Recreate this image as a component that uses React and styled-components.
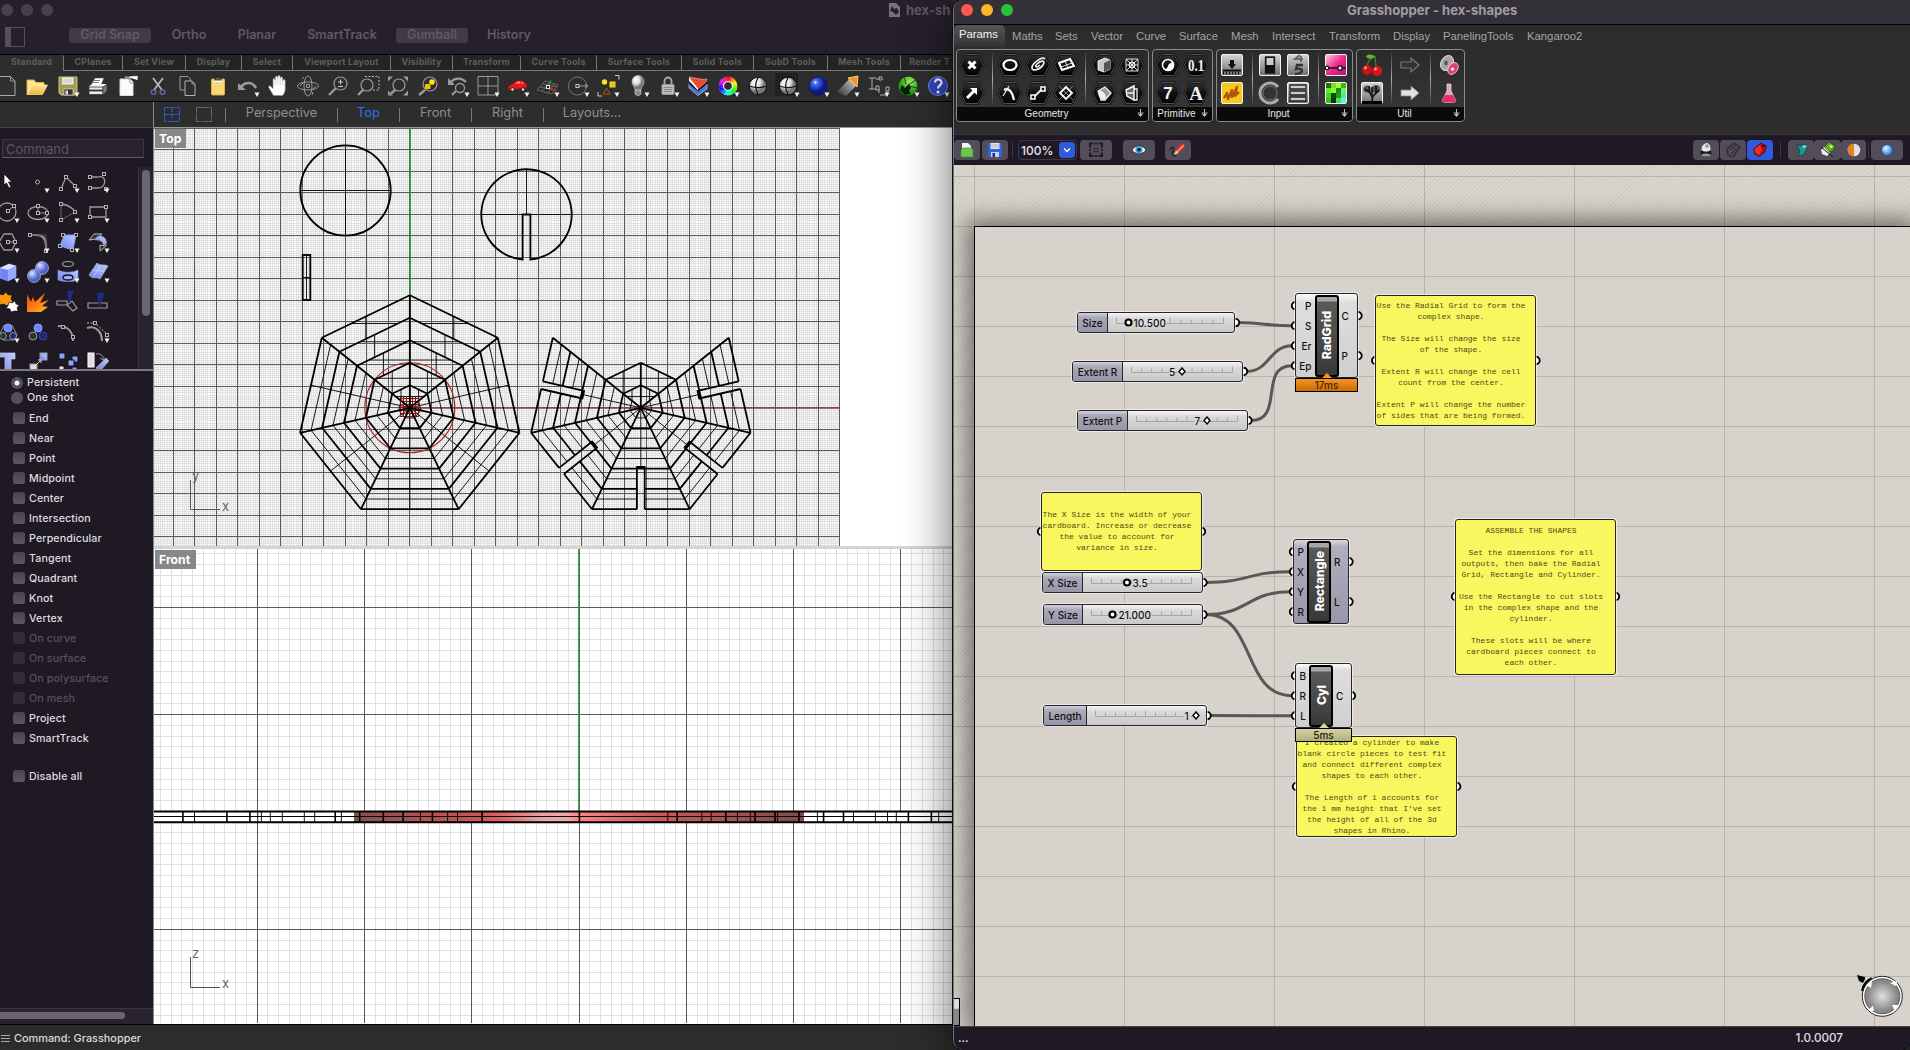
import React from "react";
import styled, { createGlobalStyle, css } from "styled-components";

const Global = createGlobalStyle`
  * { box-sizing: border-box; }
  html, body { margin: 0; padding: 0; background: #000; }
  body { width: 1910px; height: 1050px; overflow: hidden; font-family: Inter, "Liberation Sans", sans-serif; }
`;

/* ---------- shell ---------- */
const Desktop = styled.div`
  display: flex;
  width: 1910px;
  height: 1050px;
  overflow: hidden;
  background: #2c2c2c;
`;
const Rhino = styled.section`
  width: 953px;
  height: 1050px;
  flex: none;
  display: flex;
  flex-direction: column;
  background: #2c2c2c;
`;
const Hopper = styled.section`
  position: relative;
  width: 957px;
  height: 1050px;
  flex: none;
  display: flex;
  flex-direction: column;
  border-left: 1px solid #77737a;
  border-radius: 10px 0 10px 10px;
  overflow: hidden;
  background: #2d2d2d;
`;
const HopperShadow = styled.div`
  display: flex;
  border-radius: 10px 0 10px 10px;
  box-shadow: 0 0 0 1px #111, 0 8px 48px 0 rgba(0, 0, 0, 0.62);
  z-index: 2;
`;

/* ---------- Rhino title and mode bar ---------- */
const RhinoHead = styled.header`
  height: 55px;
  flex: none;
  background: #26202b;
  border-bottom: 1px solid #000;
`;
const TitleRow = styled.div`
  display: flex;
  height: 20px;
  align-items: center;
  padding-left: 1px;
  gap: 8px;
`;
const Dot = styled.i`
  flex: none;
  width: 12px;
  height: 12px;
  border-radius: 50%;
  background: ${(p) => p.$c};
`;
const DocTitle = styled.span`
  display: flex;
  flex: none;
  align-items: center;
  gap: 6px;
  margin-left: 828px;
  white-space: nowrap;
  font-size: 13px;
  font-weight: 700;
  color: #5f5966;
`;
const ModeRow = styled.div`
  display: flex;
  align-items: center;
  height: 31px;
  padding-left: 5px;
`;
const SidebarGlyph = styled.i`
  width: 20px;
  height: 20px;
  border: 1px solid #56505c;
  border-left: 6px solid #56505c;
  margin: 2px 44px 0 0;
`;
const Mode = styled.span`
  width: ${(p) => p.$w}px;
  margin-right: ${(p) => p.$gap}px;
  height: 15px;
  border-radius: 3px;
  line-height: 14px;
  text-align: center;
  white-space: nowrap;
  font-size: 12.5px;
  font-weight: 600;
  color: #5f5966;
  background: ${(p) => (p.$on ? "#413b47" : "transparent")};
`;

/* ---------- Rhino tool tabs ---------- */
const TabRow = styled.nav`
  display: flex;
  height: 16px;
  flex: none;
  background: #2d2d2d;
  overflow: hidden;
`;
const ToolTab = styled.span`
  flex: none;
  width: ${(p) => p.$w}px;
  text-align: center;
  font-size: 8.8px;
  font-weight: 700;
  letter-spacing: 0.25px;
  line-height: 14px;
  white-space: nowrap;
  color: #5e5e5e;
  background: ${(p) => (p.$on ? "#2d2d2d" : "#242424")};
  border-right: 1px solid #777;
  border-bottom: ${(p) => (p.$on ? "0" : "1px solid #777")};
  border-radius: 0 3px 0 0;
`;
const IconBar = styled.div`
  display: flex;
  flex: none;
  height: 31px;
  margin-left: -7px;
  padding-right: 0;
  background: #2d2d2d;
  border-bottom: 1px solid #000;
  overflow: hidden;
`;
const Glyph = styled.svg`
  display: block;
  flex: none;
  width: 30px;
  height: 30px;
`;

/* ---------- view tabs ---------- */
const ViewBar = styled.div`
  display: flex;
  flex: none;
  height: 26px;
  background: #2d2d2d;
`;
const ViewBlank = styled.div`
  width: 154px;
  border-right: 1px solid #888;
  border-bottom: 1px solid #454545;
`;
const ViewTabs = styled.div`
  flex: 1;
  display: flex;
  align-items: center;
  padding: 0 0 4px 10px;
  border-bottom: 1px solid #999;
`;
const LayoutIcon = styled.svg`
  width: 16px;
  height: 15px;
  margin: 3px ${(p) => p.$r}px 0 0;
`;
const ViewTab = styled.span`
  width: ${(p) => p.$w}px;
  text-align: center;
  font-size: 12.8px;
  line-height: 20px;
  white-space: nowrap;
  color: ${(p) => (p.$on ? "#2f72ec" : "#8f8f8f")};
`;
const ViewSep = styled.i`
  width: 1px;
  height: 14px;
  margin-top: 5px;
  background: #777;
`;

/* ---------- Rhino body ---------- */
const RhinoBody = styled.div`
  display: flex;
  flex: none;
  height: 896px;
`;
const Side = styled.aside`
  width: 154px;
  flex: none;
  display: flex;
  flex-direction: column;
  background: #1f1924;
  border-right: 1px solid #888;
`;
const CommandBox = styled.div`
  flex: none;
  width: 142px;
  height: 19px;
  margin: 11px 0 9px 2px;
  padding-left: 3px;
  border: 1px solid #3d3843;
  border-bottom-color: #5e5964;
  background: #28222e;
  font-size: 13px;
  line-height: 18px;
  color: #5c5761;
`;
const PaletteArea = styled.div`
  display: flex;
  flex: none;
  height: 204px;
  overflow: hidden;
  border-bottom: 2px solid #7b7980;
`;
const Palette = styled.div`
  display: grid;
  grid-template-columns: repeat(4, 30px);
  grid-auto-rows: 30px;
  margin-left: -7px;
  width: 145px;
  flex: none;
`;
const Track = styled.div`
  flex: 1;
  padding: 3px 3px 0 3px;
  background: #28232e;
  border-left: 1px solid #38333e;
`;
const Thumb = styled.i`
  display: block;
  width: 8px;
  height: 146px;
  border-radius: 4px;
  background: #6a6670;
`;
const Snaps = styled.div`
  flex: 1;
  padding-top: 4px;
`;
const RadioRow = styled.div`
  display: flex;
  align-items: center;
  height: 15px;
  padding-left: 11px;
  gap: 4px;
  font-size: 10.7px;
  font-weight: 500;
  letter-spacing: 0.1px;
  color: #dedce0;
`;
const Radio = styled.i`
  width: 12px;
  height: 12px;
  border-radius: 50%;
  background: ${(p) =>
    p.$on ? "radial-gradient(circle, #f2f2f2 0 2.2px, #55505a 2.8px)" : "#55505a"};
`;
const CheckRow = styled.div`
  display: flex;
  align-items: center;
  height: 20px;
  margin-top: ${(p) => p.$mt || 0}px;
  padding-left: 13px;
  gap: 4px;
  font-size: 10.7px;
  font-weight: 500;
  letter-spacing: 0.1px;
  color: ${(p) => (p.$off ? "#57525c" : "#dedce0")};
`;
const Check = styled.i`
  width: 12px;
  height: 12px;
  border-radius: 2.5px;
  background: ${(p) => (p.$off ? "#332d39" : "linear-gradient(#48434d, #5d5862)")};
`;
const SideFoot = styled.div`
  flex: none;
  height: 16px;
  padding-top: 3px;
  background: #28232e;
  border-top: 1px solid #3a3540;
`;
const FootThumb = styled.i`
  display: block;
  width: 125px;
  height: 7px;
  border-radius: 0 4px 4px 0;
  background: #6a6670;
`;
const Views = styled.div`
  flex: 1;
  display: flex;
  flex-direction: column;
  background: #d4d4d4;
  gap: 3px;
`;
const Viewport = styled.div`
  position: relative;
  height: ${(p) => p.$h}px;
  background: #fff;
  overflow: hidden;
`;
const Drawing = styled.svg`
  display: block;
`;
const ViewLabel = styled.span`
  position: absolute;
  left: 1px;
  top: 1px;
  height: 19px;
  width: ${(p) => p.$w}px;
  padding-left: 4px;
  background: #878787;
  color: #fff;
  font-size: 12.2px;
  font-weight: 700;
  line-height: 19px;
`;
const RhinoStatus = styled.footer`
  flex: 1;
  display: flex;
  align-items: center;
  gap: 4px;
  padding: 1px 0 0 1px;
  border-top: 1px solid #000;
  background: #2c2c2c;
  font-size: 10.9px;
  font-weight: 500;
  color: #dcdcdc;
`;

/* ---------- Grasshopper chrome ---------- */
const HopperTitle = styled.header`
  display: flex;
  align-items: center;
  flex: none;
  height: 25px;
  padding: 0 0 4px 7px;
  gap: 8px;
  background: #343038;
  border-bottom: 1px solid #000;
`;
const HopperName = styled.span`
  margin-left: 326px;
  font-size: 13.05px;
  font-weight: 700;
  color: #a19da6;
`;
const MenuRow = styled.nav`
  display: flex;
  flex: none;
  height: 22px;
  background: linear-gradient(#2b2b2b, #2d2d2d);
`;
const MenuItem = styled.span`
  width: ${(p) => p.$w}px;
  flex: none;
  font: 11.3px "Liberation Sans", Arial, sans-serif;
  line-height: 22px;
  white-space: nowrap;
  color: #a4a4a4;
  ${(p) =>
    p.$on &&
    css`
      padding-left: 5px;
      margin-right: 7px;
      line-height: 18px;
      color: #f2f2f2;
      border-radius: 5px 5px 0 0;
      background: linear-gradient(#565656, #333);
    `}
`;
const Ribbon = styled.div`
  display: flex;
  flex: none;
  height: 88px;
  gap: 3px;
  padding: 2px 0 0 2px;
  background: #2d2d2d;
  border-bottom: 1px solid #3b363f;
`;
const Group = styled.div`
  display: flex;
  flex-direction: column;
  width: ${(p) => p.$w}px;
  height: 73px;
  border: 1px solid #8b8b8b;
  border-radius: 4px;
  overflow: hidden;
  background: linear-gradient(#2a2a2a, #383838);
`;
const GroupIcons = styled.div`
  flex: 1;
  display: flex;
  align-items: center;
  padding-left: 1px;
`;
const IconCol = styled.div`
  display: flex;
  flex-direction: column;
`;
const GhIcon = styled.svg`
  display: block;
  width: 28px;
  height: 28px;
`;
const ColSep = styled.i`
  width: 1px;
  height: 52px;
  margin: 0 ${(p) => p.$r}px 0 ${(p) => p.$l}px;
  background: linear-gradient(#3a3a3a, #aaa, #3a3a3a);
`;
const GroupName = styled.div`
  display: flex;
  align-items: center;
  justify-content: center;
  height: 14px;
  padding: 0 3px 2px 0;
  background: #0a0a0a;
  color: #e8e8e8;
  font: 10px "Liberation Sans", Arial, sans-serif;
  & > span { flex: 1; text-align: center; }
`;
const ToolBar = styled.div`
  display: flex;
  align-items: center;
  flex: none;
  height: 30px;
  background: #1f1925;
`;
const ToolButton = styled.span`
  display: flex;
  align-items: center;
  justify-content: center;
  width: ${(p) => p.$w}px;
  height: 20px;
  margin-right: ${(p) => p.$r || 0}px;
  border-radius: 4px;
  background: ${(p) => (p.$on ? "#2f5bdc" : "#524d59")};
`;
const ToolSep = styled.i`
  width: 1px;
  height: 16px;
  margin: 0 ${(p) => p.$r}px 0 ${(p) => p.$l}px;
  background: #3b3642;
`;
const Combo = styled.span`
  display: flex;
  align-items: center;
  justify-content: space-between;
  width: 59px;
  height: 20px;
  margin-right: 3px;
  padding: 0 1px 0 2px;
  border: 1px solid #3d3844;
  border-radius: 4px;
  font-size: 12px;
  font-weight: 500;
  color: #e6e4e8;
`;
const ComboKnob = styled.i`
  display: flex;
  align-items: center;
  justify-content: center;
  width: 16px;
  height: 16px;
  border-radius: 4px;
  background: #2f5bdc;
`;
const Mini = styled.svg`
  width: 18px;
  height: 18px;
`;
const Spacer = styled.i`
  flex: 1;
`;
const HopperStatus = styled.footer`
  display: flex;
  align-items: center;
  justify-content: space-between;
  flex: 1;
  padding: 0 67px 2px 4px;
  background: #1f1925;
  border-top: 1px solid #444;
  font-size: 11.7px;
  font-weight: 500;
  color: #e2e0e4;
`;

/* ---------- Grasshopper canvas ---------- */
const ORIGIN = { x: 954, y: 165 };
const Canvas = styled.div`
  position: relative;
  display: flex;
  flex: none;
  height: 861px;
  padding: 61px 0 0 20px;
  overflow: hidden;
  background: repeating-linear-gradient(135deg, #d8d5cc 0 2.4px, #d0cdc4 2.4px 3.4px);
`;
const Sheet = styled.div`
  flex: 1;
  border-left: 1px solid #000;
  border-top: 1px solid #000;
  background: #d7d3cc;
  box-shadow: 0 0 22px 7px rgba(0, 0, 0, 0.48);
`;
const CanvasGrid = styled.div`
  position: absolute;
  inset: 0;
  background-image: linear-gradient(90deg, rgba(0, 0, 0, 0.15) 1px, transparent 1px),
    linear-gradient(rgba(0, 0, 0, 0.15) 1px, transparent 1px);
  background-size: 150px 150px, 50px 50px;
  background-position: 20px 0, 0 11px;
`;
const Wires = styled.svg`
  position: absolute;
  left: 0;
  top: 0;
`;
const at = css`
  position: absolute;
  left: ${(p) => p.$x - ORIGIN.x}px;
  top: ${(p) => p.$y - ORIGIN.y}px;
`;
const SliderBox = styled.div`
  ${at}
  display: flex;
  width: ${(p) => p.$w}px;
  height: 21px;
  border: 1.5px solid #26262a;
  border-radius: 3px;
  overflow: hidden;
  background: linear-gradient(#f4f4f4, #d9d9d9 30%, #c9c9c9);
  box-shadow: 0 0 0 1px rgba(255, 255, 255, 0.55);
`;
const SliderName = styled.span`
  width: ${(p) => p.$w}px;
  flex: none;
  border-right: 1.5px solid #26262a;
  background: linear-gradient(#d2d1dc, #a9a8b8 25%, #9795a8);
  font-size: 10px;
  font-weight: 500;
  line-height: 20px;
  text-align: center;
  white-space: nowrap;
  color: #111;
`;
const ValueText = styled.text`
  font: 500 10px Inter, "Liberation Sans", sans-serif;
  fill: #111;
`;
const NodeBox = styled.div`
  ${at}
  display: flex;
  width: ${(p) => p.$w}px;
  height: ${(p) => p.$h}px;
  border: 1.5px solid #26262a;
  border-radius: 3px;
  background: ${(p) =>
    p.$idle
      ? "linear-gradient(#dcdbe4, #b0afbe 8%, #9897a8)"
      : "linear-gradient(#fbfbfb, #dedede 10%, #cfcfcf)"};
  box-shadow: 0 0 0 1px rgba(255, 255, 255, 0.55);
`;
const Ports = styled.div`
  width: ${(p) => p.$w}px;
  display: flex;
  flex-direction: column;
  justify-content: space-around;
  padding: ${(p) => (p.$out ? "2px 0 1px 3px" : "2px 3px 1px 0")};
`;
const Port = styled.span`
  flex: 1;
  display: flex;
  align-items: center;
  justify-content: ${(p) => (p.$out ? "flex-start" : "flex-end")};
  font-size: 10px;
  font-weight: 500;
  color: #111;
`;
const Core = styled.div`
  width: 24px;
  margin: 0.5px 0;
  display: flex;
  align-items: center;
  justify-content: center;
  border: 2px solid #000;
  border-radius: 3px;
  background: linear-gradient(#a5a5a5 0 4px, #5a5a5a 5px, #383838);
`;
const CoreText = styled.span`
  writing-mode: vertical-rl;
  transform: rotate(180deg);
  font-size: 12.3px;
  font-weight: 800;
  letter-spacing: -0.1px;
  color: #fff;
`;
const TimeTag = styled.div`
  ${at}
  width: ${(p) => p.$w}px;
  height: 14px;
  border: 1.5px solid #000;
  background: ${(p) => (p.$hot ? "linear-gradient(#f59425, #c96c08)" : "linear-gradient(#d4d4a4, #b0b07c)")};
  font-size: 10px;
  font-weight: 500;
  line-height: 12px;
  text-align: center;
  color: ${(p) => (p.$hot ? "#4a2200" : "#22220c")};
  &::before {
    content: "";
    position: absolute;
    left: 50%;
    top: -6px;
    margin-left: -5px;
    border: 5px solid transparent;
    border-top: 0;
    border-bottom-color: ${(p) => (p.$hot ? "#f59425" : "#d4d4a4")};
  }
`;
const Note = styled.pre`
  ${at}
  margin: 0;
  width: ${(p) => p.$w}px;
  height: ${(p) => p.$h}px;
  padding: ${(p) => p.$pt}px 9px 0 0;
  border: 1.5px solid #26261a;
  border-radius: 3px;
  overflow: hidden;
  background: #f9f75f;
  box-shadow: 0 0 0 1px rgba(255, 255, 255, 0.6);
  font: 8px "Liberation Mono", monospace;
  line-height: 11px;
  text-align: center;
  color: #4c4b16;
`;
const CornerHandle = styled.i`
  position: absolute;
  left: -1px;
  top: 833px;
  width: 7px;
  height: 28px;
  border: 1px solid #000;
  background: linear-gradient(#ddd 35%, #888 40%);
`;
const Compass = styled.svg`
  position: absolute;
  left: 900px;
  top: 805px;
`;

/* ---------- Icon drawings ---------- */
const G = "#9a9a9a";
const Drop = () => <path d="M6.5 6.5h5l-2.5 4.5z" fill="#f2f2f2" />;
const Cell = ({ drop, children }) => (
  <Glyph viewBox="-15 -15 30 30" fill="none" stroke={G} strokeWidth="1">
    {children}
    {drop && <g stroke="none"><Drop /></g>}
  </Glyph>
);
const Sq = ({ x, y }) => <rect x={x - 1.5} y={y - 1.5} width="3" height="3" fill="#1f1924" stroke="#b0b0b0" strokeWidth="1" />;

const SharedDefs = () => (
  <svg width="0" height="0" aria-hidden="true" display="block">
    <defs>
      <linearGradient id="fold" x2="0" y2="1"><stop stopColor="#ffe48a" /><stop offset="1" stopColor="#f2b43a" /></linearGradient>
      <linearGradient id="blueFace" x1="0" y1="1" x2="1" y2="0"><stop stopColor="#6f7df5" /><stop offset="1" stopColor="#bcd0ff" /></linearGradient>
      <radialGradient id="blueBall" cx=".35" cy=".3"><stop stopColor="#dfe6ff" /><stop offset=".6" stopColor="#7f93ee" /><stop offset="1" stopColor="#5463c8" /></radialGradient>
      <radialGradient id="deepBall" cx=".35" cy=".3"><stop stopColor="#fff" /><stop offset=".25" stopColor="#4a6cf0" /><stop offset="1" stopColor="#0a1a90" /></radialGradient>
      <radialGradient id="skyBall" cx=".4" cy=".35"><stop stopColor="#e8f6ff" /><stop offset="1" stopColor="#4a98e0" /></radialGradient>
      <radialGradient id="whiteBall" cx=".35" cy=".3"><stop stopColor="#fff" /><stop offset=".6" stopColor="#ddd" /><stop offset="1" stopColor="#777" /></radialGradient>
      <radialGradient id="greenBall" cx=".6" cy=".3"><stop stopColor="#a4f06a" /><stop offset="1" stopColor="#2d9a1c" /></radialGradient>
      <linearGradient id="fire" x2="1" y2="1"><stop stopColor="#f24a08" /><stop offset=".5" stopColor="#ff7d10" /><stop offset="1" stopColor="#ffc020" /></linearGradient>
      <linearGradient id="hex" x2="0" y2="1"><stop stopColor="#333" /><stop offset=".5" stopColor="#111" /><stop offset="1" stopColor="#050505" /></linearGradient>
      <linearGradient id="steel" x2="0" y2="1"><stop stopColor="#d5d5d5" /><stop offset="1" stopColor="#6e6e6e" /></linearGradient>
      <linearGradient id="pink" x2="1" y2="1"><stop stopColor="#ffd0e8" /><stop offset=".5" stopColor="#f0288c" /><stop offset="1" stopColor="#b0107c" /></linearGradient>
      <linearGradient id="cone" x1="0" y1="1" x2="1" y2="0"><stop stopColor="#2d2d2d" /><stop offset=".75" stopColor="#aaa" /></linearGradient>
      <radialGradient id="dial"><stop stopColor="#e0e0e0" /><stop offset=".85" stopColor="#888" /></radialGradient>
      <linearGradient id="bar" gradientUnits="userSpaceOnUse" x1="354" x2="804" y1="0" y2="0">
        <stop offset="0" stopColor="#845050" /><stop offset=".12" stopColor="#a85252" /><stop offset=".28" stopColor="#c95656" />
        <stop offset=".34" stopColor="#e06a6a" /><stop offset=".42" stopColor="#e8a5a5" /><stop offset=".47" stopColor="#ecaaaa" />
        <stop offset=".5" stopColor="#ff8484" /><stop offset=".56" stopColor="#e87474" /><stop offset=".68" stopColor="#c95858" />
        <stop offset=".85" stopColor="#a55050" /><stop offset="1" stopColor="#7c4c4c" />
      </linearGradient>
    </defs>
  </svg>
);

const wheel = Array.from({ length: 24 }, (_, i) => {
  const a = (i * Math.PI) / 12, b = a + 0.29, r = 7;
  return <path key={i} d={`M${r * Math.sin(a)} ${-r * Math.cos(a)}A${r} ${r} 0 0 1 ${r * Math.sin(b)} ${-r * Math.cos(b)}`} stroke={`hsl(${i * 15},95%,52%)`} strokeWidth="4.4" />;
});
const gridPath = (a, b, s) => {
  let d = "";
  for (let v = a; v <= b; v += s) d += `M${v} ${a}V${b}M${a} ${v}H${b}`;
  return d;
};

const MainIcons = () => (
  <IconBar>
    <Cell><path d="M-10-9.500H2.500L7-5V9.500H-10z" fill="#303030" stroke="#aaa" /><path d="M2.500-9.500V-5H7" /></Cell>
    <Cell><path d="M-11 8V-6h7l2 2.500h8v4" fill="#ffe590" stroke="#e8ae30" /><path d="M-11 8.500L-6-1H9.500L4.500 8.500z" fill="url(#fold)" stroke="#fff0b0" strokeWidth=".7" /></Cell>
    <Cell drop><path d="M-9-9H9V9H-7L-9 7z" fill="#a39b52" stroke="#d0c880" /><rect x="-6" y="-8.500" width="11.500" height="7" fill="#ececec" stroke="none" /><path d="M-5-6H4M-5-4H4" stroke="#bbb" /><rect x="-4" y="3" width="9" height="6" fill="#333" stroke="#eee" strokeWidth=".6" /><rect x="-2.500" y="4.500" width="2.500" height="4" fill="#ddd" stroke="none" /></Cell>
    <Cell><path d="M-3-8H6L3-1H-7z" fill="#fff" stroke="#555" strokeWidth=".6" /><path d="M-4-5.500h6M-5-3.500h6" stroke="#777" /><path d="M-9 0L-5-2H9L5 1H-9z" fill="#f4f4f4" stroke="none" /><path d="M-9 1H5V4H-9zM-9 5H5V8.500H-9z" fill="#e8e8e8" stroke="#333" strokeWidth=".8" /><path d="M5 1L9-2V5L5 8.500z" fill="#777" stroke="#333" strokeWidth=".6" /></Cell>
    <Cell><path d="M-8-7H2L5-4V9.500H-8z" fill="#fafafa" stroke="#ddd" /><path d="M2-7V-3H5" stroke="#999" /><path d="M-3-9l5-1 8-.5v5l-7-2z" fill="#fff" stroke="#222" strokeWidth=".7" /><path d="M-3-9l5 2" stroke="#999" strokeWidth="2" /></Cell>
    <Cell><path d="M-5-8L4 4M5-8L-4 4" stroke="#bcbcbc" strokeWidth="1.700" /><circle cx="-4.500" cy="6" r="2.300" stroke="#5c66b0" strokeWidth="1.500" /><circle cx="4.500" cy="6" r="2.300" stroke="#5c66b0" strokeWidth="1.500" /></Cell>
    <Cell><path d="M-8-9.500H0L2.500-7V4H-8z" /><path d="M-3-5H4L7-2V9.500H-3z" fill="#2d2d2d" stroke="#b0b0b0" /><path d="M4-5V-2H7" /></Cell>
    <Cell><rect x="-6.500" y="-7" width="13" height="16" rx="1" fill="#f8d874" stroke="#e2b23c" /><path d="M-3-9H3V-5H-3z" fill="#555" stroke="#222" /><rect x="-4" y="-5.500" width="8" height="1.500" fill="#fff" stroke="none" /></Cell>
    <Cell drop><path d="M-7 1C-3-4 4-5 8 2" strokeWidth="2.600" stroke="#9c9c9c" /><path d="M-10-3V4H-2z" fill="#9c9c9c" stroke="none" /></Cell>
    <Cell><path d="M-4.500 9.500L-9 2c-1-2 .5-3 2-1.500L-5 2.500V-6c0-2 2-2 2.200 0V-8c0-2.500 2.500-2.500 2.500 0V-9c0-2 2.500-2 2.500 0v1.500c0-2 2.500-2 2.500 0V-5c0-2 2.500-2 2.500 0V3c0 3-1.500 5-2.500 6.500z" fill="#fff" stroke="#888" strokeWidth=".6" /><path d="M-2.800-6v5M-.3-7.500v6.500M2.200-7v6M4.700-5v4" stroke="#bbb" strokeWidth=".6" /></Cell>
    <Cell><ellipse rx="4" ry="10" /><ellipse rx="10.500" ry="4" /><path d="M-1.500-1.500h3v3h-3zM-4-9l-2 2M5 6l-1 3M-8 0l3-3M8 0l-3 3" /></Cell>
    <Cell><circle cx="2.500" cy="-2.500" r="6.500" strokeWidth="1.200" /><path d="M-2 2L-9 9" strokeWidth="2.400" /><path d="M0-4H5M2.500-6.500V-1.500M0 .5H5" stroke="#ccc" /></Cell>
    <Cell><path d="M-3-9.500H11V4H4" strokeDasharray="2 1.500" stroke="#bbb" /><circle cx="-1" cy="-1" r="6" strokeWidth="1.200" /><path d="M-5 4L-10 9" strokeWidth="2.400" /></Cell>
    <Cell><path d="M-10-4.500V-9.500H-5zM5-9.500H10V-4.500zM10 4.500V9.500H5zM-5 9.500H-10V4.500z" fill="#999" stroke="none" /><circle cx="1" cy="-1" r="6" strokeWidth="1.200" /><path d="M-3 4L-7 7.500" strokeWidth="2.400" /></Cell>
    <Cell><circle cx="2" cy="-2" r="7" strokeWidth="1.200" /><circle cx="4" cy="-4" r="2.800" fill="#ffe61a" stroke="none" /><rect x="-3" y="-2" width="5.500" height="5" rx="1" fill="#e8c800" stroke="none" /><path d="M-3 4L-9 9" strokeWidth="2.400" /></Cell>
    <Cell drop><path d="M-7-4C-3-9 4-8 8-4" strokeWidth="2.200" /><path d="M-10-8V-1H-3z" fill="#9c9c9c" stroke="none" /><circle cx="2" cy="2" r="4.500" strokeWidth="1.300" /><path d="M-2 5L-6 9" strokeWidth="2.200" /></Cell>
    <Cell drop><path d="M-10-9.500H10V9H-10zM0-9.500V9M-10 0H10" /><path d="M-5-9V0M5 0v4" stroke="#39396c" /></Cell>
    <Cell drop><path d="M-10 1C-9-1-6-2-4-3c2-3 8-3 10-1 2 1 3 2 3 6L-9 4z" fill="#e01c1c" stroke="#900" strokeWidth=".6" /><path d="M-3-2.500L0-4.500H2V-2.500zM3-4.500L6-2.500H3z" fill="#ff9a9a" stroke="none" /><circle cx="-5.500" cy="3.500" r="1.800" fill="#ddd" stroke="#222" /><circle cx="5" cy="3.500" r="1.800" fill="#ddd" stroke="#222" /></Cell>
    <Cell drop><path d="M-11 4L-3-5 10-1 4 8zM-8 1L7 4M-5-2L9 1M-6 5L2-4M0 7L6-2" strokeWidth=".7" stroke="#808080" /><path d="M0 1L9 5" stroke="#e02020" strokeWidth="1.300" /><path d="M0 1L3-6" stroke="#20a020" strokeWidth="1.300" /><rect x="-1.500" y="-.5" width="3" height="3" fill="#222" stroke="#ddd" /></Cell>
    <Cell drop><circle cx="-.5" r="9" stroke="#777" /><path d="M0 0H9M7-2l3 2-3 2" stroke="#999" /><rect x="-2" y="-1.500" width="3" height="3" fill="#222" stroke="#ccc" /></Cell>
    <Cell drop><circle cx="-3.500" cy="-4" r="2.700" fill="#ffe21a" stroke="none" /><rect x="2" y="-4" width="5" height="5" fill="#f6b420" stroke="#ffe21a" /><path d="M-1.500 2L2 8H-5z" stroke="#a85a10" /><path d="M7-10.500h4v4M-10 6v4h4" stroke="#ccc" /></Cell>
    <Cell drop><path d="M-3 4C-3 1-6-1-6-4.500a6 6 0 0 1 12 0C6-1 3 1 3 4z" fill="url(#whiteBall)" stroke="#ccc" strokeWidth=".6" /><path d="M-3 4.500H3V8L0 10-3 8z" fill="#888" stroke="#ccc" strokeWidth=".7" /></Cell>
    <Cell drop><path d="M-3.500-1V-5a3.500 3.500 0 0 1 7 0V-1" stroke="#aaa" strokeWidth="1.800" /><rect x="-6" y="-1.500" width="12" height="10" rx="1" fill="#bdbdbd" stroke="#999" /><path d="M-4 1.500H4M-4 3.500H4M-4 5.500H4" stroke="#777" strokeWidth=".8" /></Cell>
    <Cell drop><path d="M-9-3L0 5 9-2V3L0 9.500-9 2z" fill="#4f74dc" stroke="#bcc8e8" strokeWidth=".7" /><path d="M-9-6L0 2 9-5V-2L0 5.500-9-2z" fill="#141414" stroke="none" /><path d="M-9-9L5-6.500 9-7 8-4 0 3z" fill="#ea4a30" stroke="#ff9a84" strokeWidth=".7" /><path d="M-9-8.500L0 2.500V4.500L-9-5z" fill="#fff" stroke="none" /></Cell>
    <Cell drop><circle r="9.200" fill="#fff" stroke="none" />{wheel}<circle r="4.300" fill="#2d2d2d" stroke="#fff" strokeWidth=".8" /></Cell>
    <Cell><circle r="8.700" fill="url(#whiteBall)" stroke="#111" /><path d="M0-8.500C-3-3-3 3 0 8.500M-8.500 0C-3 2 3 2 8.500 0" stroke="#111" strokeWidth="1.200" /></Cell>
    <Cell drop><path d={gridPath(-12, 9, 3)} stroke="#111" strokeWidth=".8" /><circle r="8.700" fill="url(#whiteBall)" stroke="#111" /><path d="M0-8.500C-3-3-3 3 0 8.500M-8.500 0C-3 2 3 2 8.500 0" stroke="#111" strokeWidth="1.200" /></Cell>
    <Cell drop><circle r="9" fill="url(#deepBall)" stroke="#0a1260" strokeWidth=".8" /></Cell>
    <Cell drop><path d="M-11 6L2-8 8 0-2 10z" fill="url(#cone)" stroke="none" /><path d="M0-8L10-10 9 1z" fill="#f0961e" stroke="#ffd27a" /></Cell>
    <Cell drop><path d="M-9-8H-2M-6-8V3M-9 3H-2M1-6v-3h3v3zM-2 0h3v4h-3zM1 7v-4M8 1h3v4h-3zM2 9H10M9 5v4M1-7H-2" stroke="#b0b0b0" /></Cell>
    <Cell drop><circle r="10" fill="url(#greenBall)" stroke="#0c3c08" /><path d="M-8 4L-6-1-3 2 1-2 3 2 1 5 3 8-3 9z" fill="#0b1c06" stroke="none" /><path d="M0-1L8-6M1 0L9 2M-2-2L-4-9" stroke="#14501a" /></Cell>
    <Cell drop><circle r="9.500" fill="#3346c4" stroke="#7c8ae0" /><path d="M-3-3.500C-3-8 4-7.500 3.500-3 3-.5 0-.5 0 2.500" stroke="#fff" strokeWidth="2.200" /><circle cy="6" r="1.500" fill="#fff" stroke="none" /></Cell>
  </IconBar>
);

const PaletteIcons = () => (
  <Palette>
    <Cell><path d="M-4-8V3L-1.500 1 1 6 3 5 .5 0H4z" fill="#fff" stroke="#000" strokeWidth=".7" /></Cell>
    <Cell drop><circle r="2" cx="-.5" stroke="#aaa" /></Cell>
    <Cell drop><path d="M-7 7L-2-5 7 4" strokeWidth="1.300" /><Sq x={-7} y={7} /><Sq x={-2} y={-5} /><Sq x={7} y={4} /></Cell>
    <Cell drop><path d="M-8-5H0C9-8 9 6 0 6H-8" strokeWidth="1.300" /><Sq x={-8} y={-5} /><Sq x={6} y={-8} /><Sq x={-8} y={6} /><Sq x={8} y={7} /></Cell>

    <Cell drop><circle r="9" cx="-1" strokeWidth="1.300" /><path d="M0-1L6-6" /><Sq x={0} y={-1} /><Sq x={6} y={-6} /></Cell>
    <Cell drop><ellipse cy="1" rx="10" ry="6.500" strokeWidth="1.300" /><path d="M0 1V-6M0 1H9" /><Sq x={0} y={1} /><Sq x={0} y={-6} /><Sq x={9} y={1} /></Cell>
    <Cell drop><path d="M-7-8C0-7 5-4 7 0L-7 8z" stroke="#666" /><path d="M-7-8C0-7 5-4 7 0" strokeWidth="1.400" /><Sq x={-7} y={-8} /><Sq x={7} y={0} /><Sq x={-7} y={8} /></Cell>
    <Cell drop><path d="M-8-5H8V5H-8z" strokeWidth="1.300" /><Sq x={8} y={-5} /><Sq x={-8} y={5} /></Cell>

    <Cell drop><path d="M-4-8H4L8 0 4 8H-4L-9 0z" strokeWidth="1.300" /><path d="M0 0H7" /><Sq x={0} y={0} /><Sq x={7} y={0} /></Cell>
    <Cell drop><path d="M-8-7H-2C5-7 8-3 8 3V8" strokeWidth="2.200" /><path d="M-8-7H8V8" stroke="#555" /><Sq x={-8} y={-7} /><Sq x={8} y={9} /></Cell>
    <Cell drop><path d="M-4-7H8L5 8-8 4z" fill="url(#blueFace)" stroke="#8894f0" /><Sq x={-5} y={-7} /><Sq x={8} y={-7} /><Sq x={4} y={8} /><Sq x={-8} y={4} /></Cell>
    <Cell drop><path d="M-9-2L-4-8 4-8-2-3z" fill="#333" stroke="#bbb" /><path d="M-2-4C1-8 8-5 8-1L6 4C4-2 1-2-3-2z" fill="url(#blueFace)" stroke="#99a" strokeWidth=".6" /><path d="M6 4L8-1V4L2 9V3z" fill="#222" stroke="#bbb" /></Cell>

    <Cell drop><path d="M-8-4L1-8 8-6V5L0 9-8 6z" fill="#7281f4" stroke="#9dabff" strokeWidth=".6" /><path d="M-8-4L1-8 8-6 0-2z" fill="#dbe4ff" stroke="none" /><path d="M0-2L8-6V5L0 9z" fill="#99a8fa" stroke="none" /></Cell>
    <Cell drop><circle cx="4" cy="-4" r="6.500" fill="url(#blueBall)" stroke="#aab" strokeWidth=".8" /><circle cx="-4" cy="4" r="6.500" fill="url(#blueBall)" stroke="#aab" strokeWidth=".8" /></Cell>
    <Cell drop><ellipse cy="-8" rx="5.500" ry="2.500" strokeWidth="1.200" /><path d="M-10-2C-4 1 4 1 10-2V8C4 10-4 10-10 8z" fill="url(#blueFace)" stroke="#8894f0" strokeWidth=".6" /><ellipse cy="5.500" rx="5" ry="2.500" fill="#9fb0ff" stroke="#111" strokeWidth="1.300" /></Cell>
    <Cell drop><path d="M-9 3L-1-9C2-6 6-8 10-6L2 7C-2 4-5 8-9 3z" fill="url(#blueFace)" stroke="#aab" strokeWidth=".8" /><path d="M-5-2C-1 0 3-3 6 0M3-7L-4 4" stroke="#dfe6ff" strokeWidth=".6" /></Cell>

    <Cell><path d="M-8-8l3 1 3-3 2 3h4l-1 4 2 3-4 1-2 3-3-2-5 1 1-4-3-3z" fill="#f79a12" stroke="#000" strokeWidth=".5" /><path d="M1 0l3 1 3-2 1 3 3 1-2 3 1 3-4 0-3 1-1-3-4-1 2-2z" fill="#fff" stroke="#000" strokeWidth=".5" /></Cell>
    <Cell><path d="M-11 10V-8L-7 0-5-5-3 0 7-9 2 1 11-2 4 4 10 5 3 10z" fill="url(#fire)" stroke="none" /></Cell>
    <Cell><path d="M-11-1H-1V3H-11zM-1 3L4-1 9 6 5 9z" stroke="#9a9a9a" strokeWidth="1.200" /><path d="M-1-11H6L1 2z" fill="#1c2a8c" stroke="none" /></Cell>
    <Cell><path d="M-10 1H9V6H-10z" strokeWidth="1.200" /><path d="M-1-9H7L1 5z" fill="#1c2a8c" stroke="none" /></Cell>

    <Cell drop><path d="M-4-7L-9 4-5 8H6L9 3 4-7" stroke="#8a8a8a" /><circle cy="-4" r="4" fill="#6f84ff" stroke="#8fa0ff" /><circle cx="-5" cy="4" r="3.500" fill="#333" /><circle cx="5" cy="4" r="3.500" fill="#1c2a7c" /></Cell>
    <Cell><circle cy="-4" r="4" fill="#6f84ff" stroke="#8fa0ff" /><circle cx="-5" cy="4" r="4" fill="#333" /><circle cx="5" cy="4" r="4" fill="#1c2a7c" stroke="#34449c" /></Cell>
    <Cell><path d="M-10-6C0-6 5 0 5 9" strokeWidth="2" /><Sq x={-5} y={-5} /><Sq x={5} y={5} /></Cell>
    <Cell drop><path d="M-11-4C-2-7 4 0 4 9" strokeWidth="2.200" /><path d="M-11-9H-3L9 2V7" strokeDasharray="2 1.500" stroke="#bbb" /><Sq x={-3} y={-9} /><Sq x={9} y={3} /></Cell>

    <Cell><path d="M-10-9H7V-3H3V12H-3V-5H-10z" fill="url(#blueFace)" stroke="#ccd" strokeWidth=".7" /></Cell>
    <Cell><rect x="2" y="-9" width="7" height="7" fill="url(#blueFace)" /><rect x="-8" y="2" width="7" height="6" fill="#ddd" /><path d="M-2 3L3-2M0-2h3v3" stroke="#ccc" /></Cell>
    <Cell><rect x="-9" y="-9" width="6" height="6" fill="#8fa0ff" stroke="#111" /><rect x="4" y="-6" width="6" height="6" fill="#8fa0ff" stroke="#111" /><rect x="0" y="-2" width="6" height="6" fill="#8fa0ff" stroke="#111" /><rect x="-9" y="4" width="5" height="5" fill="#eee" stroke="#111" /><rect x="4" y="5" width="5" height="5" fill="#8fa0ff" stroke="#111" /></Cell>
    <Cell><rect x="-10" y="-9" width="6" height="14" fill="#ddd" stroke="#fff" /><path d="M-2-8C3-9 6-6 5-2M2-4l3 2 3-2" /><path d="M-2 6L8-4 11-1 2 9z" fill="url(#blueFace)" /></Cell>
  </Palette>
);

/* ---------- ribbon icons ---------- */
const Hex = ({ children }) => (
  <GhIcon viewBox="-14 -14 28 28" fill="none" stroke="#eee" strokeWidth="1.300">
    <path d="M-6-10.500H6L11.500 0 6 10.500H-6L-11.500 0z" fill="url(#hex)" stroke="#000" strokeWidth="2" />
    <path d="M-6-10.500H6L11.500 0 6 10.500H-6L-11.500 0z" stroke="#666" strokeWidth=".8" />
    {children}
  </GhIcon>
);
const Tile = ({ fill = "url(#steel)", children }) => (
  <GhIcon viewBox="-14 -14 28 28" fill="none" stroke="#111" strokeWidth="1.300">
    <rect x="-10.500" y="-10.500" width="21" height="21" rx="1.500" fill={fill} stroke="#f2f2f2" strokeWidth="1" />
    {children}
  </GhIcon>
);
const Bare = ({ children }) => <GhIcon viewBox="-14 -14 28 28" fill="none">{children}</GhIcon>;
const HexText = styled.text`
  font: 700 ${(p) => p.$s}px ${(p) => (p.$sans ? '"Liberation Sans", sans-serif' : '"Liberation Serif", serif')};
  fill: #f2f2f2;
  stroke: none;
  text-anchor: middle;
`;
const greens = ["#2c6c10", "#7fe01c", "#a8f83c", "#39b80c", "#58f028", "#8cf81c", "#1e8c10", "#6cf070", "#46d020", "#0c4c08", "#24a018", "#50e8a0", "#36c018", "#0a3808", "#48e060", "#60f8c0"];

const PlusMark = () => (
  <svg width="9" height="10" viewBox="0 0 9 10"><path d="M4.500 1V8M1.500 5H7.500M2.500 6L4.500 8.500 6.500 6" stroke="#bbb" fill="#bbb" strokeWidth="1" /></svg>
);

const RibbonGroups = () => (
  <Ribbon>
    <Group $w={193}>
      <GroupIcons>
        <IconCol>
          <Hex><path d="M-3.500-3.500L3.500 3.500M3.500-3.500L-3.500 3.500" stroke="#fff" strokeWidth="3" /></Hex>
          <Hex><path d="M-5 5L2-2" stroke="#fff" strokeWidth="3" /><path d="M-2-5H5V2z" fill="#fff" stroke="none" /></Hex>
        </IconCol>
        <ColSep $l={6} $r={3} />
        <IconCol>
          <Hex><ellipse rx="6.500" ry="5" stroke="#fff" strokeWidth="2.200" /></Hex>
          <Hex><path d="M-6-3C-1-6 3 0 4 7" stroke="#fff" strokeWidth="2.200" /><path d="M-7 3L-1-7" strokeWidth="1.200" /></Hex>
        </IconCol>
        <IconCol>
          <Hex><path d="M7-6C4-9-5-2-6 2-7 7 2 5 5 0 8-5 3-5-1-1-4 2-1 3 2 0" strokeWidth="1.700" /></Hex>
          <Hex><path d="M-4 4L4-4" strokeWidth="1.800" /><path d="M-7 2h4v4h-4zM3-6h4v4h-4z" fill="#111" stroke="#fff" strokeWidth="1.500" /></Hex>
        </IconCol>
        <IconCol>
          <Hex><path d="M-7-2L4-6 8 1-4 5z" stroke="#fff" strokeWidth="2" /><path d="M-5 2L6-2M-1-4L2 3" strokeWidth=".9" /></Hex>
          <Hex><path d="M0-6L6 0 0 6-6 0zM-7-7L7 7M7-7L-7 7" stroke="#aaa" strokeWidth=".7" /><path d="M0-6L6 0 0 6-6 0z" stroke="#fff" strokeWidth="1.800" /></Hex>
        </IconCol>
        <ColSep $l={5} $r={4} />
        <IconCol>
          <Hex><path d="M-6-4L1-7 6-5V4L0 7-6 5z" fill="#c8c8c8" stroke="#fff" strokeWidth=".8" /><path d="M0-2V7L6 4V-5z" fill="#555" stroke="none" /></Hex>
          <Hex><path d="M-6-2L1-6 7 0 1 7-3 7z" fill="#999" stroke="#eee" /><ellipse cx="-2" cy="2" rx="3" ry="5" transform="rotate(-35 -2 2)" fill="#eee" stroke="none" /></Hex>
        </IconCol>
        <IconCol>
          <Hex><path d="M-6-6H6V6H-6zM0-6V6M-6 0H6M-6-6L6 6M6-6L-6 6" strokeWidth=".9" /><circle r="3" stroke="#fff" strokeWidth="1" /></Hex>
          <Hex><path d="M-6-3L2-7V7L-5 3z" fill="#666" stroke="#fff" strokeWidth="1.400" /><path d="M2-4H5V7H2M-5 0H2" stroke="#eee" strokeWidth="1.300" /></Hex>
        </IconCol>
      </GroupIcons>
      <GroupName><span>Geometry</span><PlusMark /></GroupName>
    </Group>
    <Group $w={61}>
      <GroupIcons>
        <IconCol>
          <Hex><circle r="5.500" stroke="#fff" strokeWidth="1.500" /><path d="M4.500-4A5.500 5.500 0 0 1-4 4.500C0 4 0 0 1-1 2-2 4-2 4.500-4z" fill="#fff" stroke="none" /></Hex>
          <Hex><HexText $s={17} $sans y="6">7</HexText></Hex>
        </IconCol>
        <IconCol>
          <Hex><HexText $s={13} y="4.500" transform="scale(1 1.250)">0.1</HexText></Hex>
          <Hex><HexText $s={19} y="6.500">A</HexText></Hex>
        </IconCol>
      </GroupIcons>
      <GroupName><span>Primitive</span><PlusMark /></GroupName>
    </Group>
    <Group $w={137}>
      <GroupIcons>
        <IconCol>
          <Tile><path d="M-2-5H2V-1H4L0 4-4-1H-2z" fill="#111" stroke="none" /><path d="M-9 5.500H9" strokeWidth="2" /><path d="M-9 8H9" strokeDasharray="1 2" strokeWidth="3" /></Tile>
          <Tile fill="#fbc61e"><path d="M-8 5L-5 0-4 6 0-3 0 4 5-6 3 3 7-1" stroke="#a85a08" strokeWidth="2.400" strokeLinejoin="round" /></Tile>
        </IconCol>
        <ColSep $l={6} $r={3} />
        <IconCol>
          <Tile><rect x="-4.500" y="-8" width="9" height="16" fill="#111" /><rect x="-3.500" y="-7" width="7" height="7" fill="#ccc" stroke="none" /></Tile>
          <Bare><path d="M8-6A10 10 0 1 0 8 6" stroke="#aaa" strokeWidth="3" /><circle r="7" fill="#333" stroke="#777" /></Bare>
        </IconCol>
        <IconCol>
          <Tile><path d="M2-10L-3-6H5M3-9V-3" stroke="#666" strokeWidth="2" /><path d="M5 0H-1L-2 4C6 2 6 9-3 9" stroke="#333" strokeWidth="2.400" /></Tile>
          <Tile><path d="M-8-8H8V-4H-8zM-8-2H8V2H-8zM-8 4H8V8H-8z" stroke="#222" fill="#ccc" /></Tile>
        </IconCol>
        <ColSep $l={6} $r={3} />
        <IconCol>
          <Tile fill="url(#pink)"><path d="M-10 3H10" strokeWidth="1.500" /><circle cx="-9" cy="3" r="1.800" fill="#fff" /><circle cx="4" cy="3" r="2.200" fill="#fff" /></Tile>
          <Tile>{greens.map((c, i) => <rect key={i} x={-10 + (i % 4) * 5} y={-10 + Math.floor(i / 4) * 5} width="5" height="5" fill={c} stroke="none" />)}</Tile>
        </IconCol>
      </GroupIcons>
      <GroupName><span>Input</span><PlusMark /></GroupName>
    </Group>
    <Group $w={109}>
      <GroupIcons>
        <IconCol>
          <Bare><path d="M-5 3C-5-3-2-7 3-9M4 4C4-1 3-6 3-9" stroke="#3c7a1c" strokeWidth="1.400" /><path d="M-6-9C-2-12 2-10 3-8-1-5-5-6-6-9z" fill="#62b42c" /><circle cx="-5" cy="5" r="5" fill="#cc1414" /><circle cx="5" cy="6" r="5" fill="#d81818" /><circle cx="-6.500" cy="3" r="1.400" fill="#ff9a9a" /><circle cx="3.500" cy="4" r="1.400" fill="#ff9a9a" /></Bare>
          <Tile><path d="M0 9C1 4 0 2-4-2M0 5C2 1 5 0 7-3M0 2V-6M-4-2L-8-4M4 0V-7M-2 0L-3-7" strokeWidth="1.600" /><path d="M-10 9.500H10" stroke="#000" strokeWidth="3" /><circle cx="-5" cy="-4" r="3.500" fill="#1119" stroke="none" /><circle cx="4" cy="-4" r="4" fill="#1119" stroke="none" /></Tile>
        </IconCol>
        <ColSep $l={5} $r={4} />
        <IconCol>
          <Bare><path d="M-9-3H1V-7L9 0 1 7V3H-9z" fill="#333" stroke="#777" strokeWidth="1.200" /></Bare>
          <Bare><path d="M-9-3H1V-7L9 0 1 7V3H-9z" fill="#e2e2e2" stroke="#888" strokeWidth=".8" /></Bare>
        </IconCol>
        <ColSep $l={6} $r={4} />
        <IconCol>
          <Bare><ellipse cx="-2" cy="-2" rx="6" ry="8" transform="rotate(30 -2 -2)" fill="#a8a8a8" stroke="#eee" strokeWidth=".8" /><ellipse cx="-3" cy="-2" rx="1.800" ry="2.500" fill="#555" /><ellipse cx="4" cy="3.500" rx="4.500" ry="6.500" transform="rotate(35 4 3.500)" fill="#e0407c" stroke="#fcc" strokeWidth=".8" /><circle cx="3.500" cy="4" r="1.600" fill="#fff" /></Bare>
          <Bare><path d="M-2-9H2V-2L7 8C7 10-7 10-7 8L-2-2z" fill="#d8a8b8" stroke="#eee" strokeWidth=".7" /><path d="M-4 2H4L7 8C7 10-7 10-7 8z" fill="#e0306c" /></Bare>
        </IconCol>
      </GroupIcons>
      <GroupName><span>Util</span><PlusMark /></GroupName>
    </Group>
  </Ribbon>
);

const CanvasTools = () => (
  <ToolBar>
    <ToolButton $w={26} $r={2}><Mini viewBox="0 0 18 18"><path d="M4 2H10L13 5V10H4z" fill="#f4f4f4" /><path d="M3 9L5 7H14L15 9V16H3z" fill="#6cc448" stroke="#3c8c28" strokeWidth=".6" /></Mini></ToolButton>
    <ToolButton $w={26} $r={4}><Mini viewBox="0 0 18 18"><path d="M2 2H16V16H2z" fill="#2f62e0" /><path d="M4.500 2H13.500V8H4.500z" fill="#e8e8f0" /><path d="M5 11H13V16H5z" fill="#c8d0e8" /><path d="M6.500 12H9V16H6.500z" fill="#22307c" /><path d="M5 4H13M5 6H13" stroke="#99a" strokeWidth=".7" /></Mini></ToolButton>
    <ToolSep $l={0} $r={5} />
    <Combo>100%<ComboKnob><svg width="8" height="6" viewBox="0 0 8 6"><path d="M1 1.500L4 4.500 7 1.500" fill="none" stroke="#fff" strokeWidth="1.300" /></svg></ComboKnob></Combo>
    <ToolButton $w={32} $r={11}><Mini viewBox="0 0 18 18"><path d="M3 6.500V2.500H6.500M8 2.500H10M11.500 2.500H15V6.500M15 8V10M15 11.500V15H11.500M10 15H8M6.500 15H3V11.500M3 10V8" fill="none" stroke="#1e1b22" strokeWidth="2" /><path d="M7 7L8.300 8.300M11 7L9.700 8.300M7 11L8.300 9.700M11 11L9.700 9.700" stroke="#1e1b22" strokeWidth="1.400" /></Mini></ToolButton>
    <ToolButton $w={32} $r={10}><Mini viewBox="0 0 18 18"><path d="M2 9C5 3.500 13 3.500 16 9 13 14 5 14 2 9z" fill="#f4f4f4" stroke="#222" strokeWidth=".8" /><circle cx="9" cy="8.800" r="3.600" fill="#38a8e8" /><circle cx="9" cy="8.800" r="1.800" fill="#0a1a30" /></Mini></ToolButton>
    <ToolButton $w={26}><Mini viewBox="0 0 18 18"><path d="M1 9C2 5 6 6 4 10 2 14 5 16 7 14" fill="none" stroke="#222" strokeWidth="1.400" /><path d="M5 14L8 7 13 2 16 5 11 11z" fill="#e03020" /><path d="M8 11L15 4" stroke="#ff9a80" strokeWidth="1.500" /><path d="M5 14L7 9.500 9.500 12z" fill="#f0d8b0" /></Mini></ToolButton>
    <Spacer />
    <ToolButton $w={26} $r={1}><Mini viewBox="0 0 18 18"><ellipse cx="9" cy="12" rx="5.500" ry="4" fill="#1c1c1c" /><ellipse cx="9" cy="14" rx="4.500" ry="1.600" fill="#999" /><path d="M4.500 9C4.500 4 8 2 10 2 13 3 13.500 6 13.500 9 11 11 7 11 4.500 9z" fill="#e8e8e8" /><path d="M8 4L11 3 12 6 9 7z" fill="#999" /></Mini></ToolButton>
    <ToolButton $w={26} $r={1}><Mini viewBox="0 0 18 18"><path d="M3 8L10 2 16 6 9 16 4 14z" fill="none" stroke="#36323c" strokeWidth="1.700" /><path d="M6 9L12 4M7 13L13 7" stroke="#36323c" strokeWidth="1.300" /></Mini></ToolButton>
    <ToolButton $w={26} $on><Mini viewBox="0 0 18 18"><path d="M2.500 8L10 2 15.500 5 14 11 8 15.500 3.500 13z" fill="#b01010" stroke="#500" strokeWidth=".7" /><path d="M3.500 8L9 4 11 9 8 14 4.500 12z" fill="#e83028" /><ellipse cx="12.500" cy="5" rx="1.800" ry="1.200" fill="#600" /></Mini></ToolButton>
    <ToolSep $l={7} $r={7} />
    <ToolButton $w={26}><Mini viewBox="0 0 18 18"><path d="M4 3L8 5 13 3 15 8 11 14 6 15 8 10z" fill="#169c94" stroke="#0a3c3c" strokeWidth=".8" /><ellipse cx="12.500" cy="5.500" rx="2" ry="1.300" fill="#7ae0d8" /></Mini></ToolButton>
    <ToolButton $w={27}><Mini viewBox="0 0 18 18"><path d="M5 6L10 1 16 5 14 10 10 11z" fill="#5cac1c" stroke="#224c08" strokeWidth=".7" /><circle cx="12" cy="5.500" r="1.700" fill="#c0f080" /><path d="M2 9L5 6 11 12 8 15 3 13z" fill="#eee" /><path d="M2 6L14 16" stroke="#111" /></Mini></ToolButton>
    <ToolButton $w={25}><Mini viewBox="0 0 18 18"><circle cx="9" cy="9" r="6.300" fill="#e2e0e0" /><path d="M9 2.700A6.300 6.300 0 0 0 9 15.300z" fill="#e8821c" /></Mini></ToolButton>
    <ToolSep $l={2} $r={2} />
    <ToolButton $w={32} $r={7}><Mini viewBox="0 0 18 18"><circle cx="9" cy="9" r="5.500" fill="url(#skyBall)" stroke="#28489c" /></Mini></ToolButton>
  </ToolBar>
);

/* ---------- viewport drawings ---------- */
const P = (c, r, a) => [c[0] + r * Math.sin(a), c[1] - r * Math.cos(a)];
const f = (p) => `${p[0].toFixed(1)} ${p[1].toFixed(1)}`;
const A7 = (Math.PI * 2) / 7;

const topIso = (c, rings) => {
  let d = "";
  const sx = Math.sin(A7), sy = Math.cos(A7), k = (1 - sy) / sx;
  for (let i = 1; i <= rings; i++) {
    const ro = i * 22.5, ri = ro - 22.5, xm = (sx * ro) / 2, ym = -(ro + sy * ri) / 2;
    const yEnd = Math.min(-ri + k * xm, (-sy / sx) * xm);
    const xo = Math.min((ym + ro) / k, (sx / sy) * -ym), xi = Math.max(0, (ym + ri) / k);
    [1, -1].forEach((s) => {
      d += `M${c[0] + s * xm} ${c[1] - ro + k * xm}V${c[1] + yEnd}`;
      d += `M${c[0] + s * xi} ${c[1] + ym}H${c[0] + s * xo}`;
    });
  }
  return d;
};

const buildWeb = (c, slotted) => {
  let bold = "", thin = "";
  const top = slotted ? 2 : 5, ap = Math.cos(A7 / 2), slot = 3.9;
  for (let k = 0; k < 7; k++) {
    const a = k * A7, b = a + A7, m = a + A7 / 2, isTop = k === 0 || k === 6;
    const reach = k === 0 && slotted ? 45 : 112.5;
    bold += `M${f(c)}L${f(P(c, reach, a))}`;
    for (let h = 1; h <= 10; h++) {
      const r = h * 11.25, full = h % 2 === 0;
      if (isTop && (!full || h / 2 > top)) continue;
      let seg;
      if (slotted && !isTop && h > 6) {
        const mid = P(c, r * ap, m), t = [Math.cos(m), Math.sin(m)];
        const l = [mid[0] - t[0] * slot, mid[1] - t[1] * slot], q = [mid[0] + t[0] * slot, mid[1] + t[1] * slot];
        seg = `M${f(P(c, r, a))}L${f(l)}M${f(q)}L${f(P(c, r, b))}`;
      } else seg = `M${f(P(c, r, a))}L${f(P(c, r, b))}`;
      if (full) bold += seg; else thin += seg;
    }
    if (!isTop) {
      thin += `M${f(c)}L${f(P(c, (slotted ? 59 : 112.5 * ap), m))}`;
      if (slotted) {
        const t = [Math.cos(m) * slot, Math.sin(m) * slot], i = P(c, 59, m), o = P(c, 112.5 * ap, m);
        bold += `M${f([o[0] - t[0], o[1] - t[1]])}L${f([i[0] - t[0], i[1] - t[1]])}L${f([i[0] + t[0], i[1] + t[1]])}L${f([o[0] + t[0], o[1] + t[1]])}`;
      }
    }
  }
  return { bold, thin: thin + topIso(c, top) };
};

const lines = (from, to, step, origin, vertical, a, b) => {
  let d = "";
  for (let n = Math.ceil((from - origin) / step); origin + n * step <= to + 0.01; n++) {
    const v = Math.floor(origin + n * step) + 0.5;
    d += vertical ? `M${v} ${a}V${b}` : `M${a} ${v}H${b}`;
  }
  return d;
};

const AxisText = styled.text`
  font: 13px Inter, "Liberation Sans", sans-serif;
  fill: #666;
`;

const TopView = () => {
  const c1 = [409.8, 407.8], c2 = [640.8, 407.8];
  const w1 = buildWeb(c1, false), w2 = buildWeb(c2, true);
  return (
    <Drawing width="799" height="418" viewBox="154 128 799 418" fill="none">
      <g shapeRendering="crispEdges">
        <path d={lines(154, 839, 2.15, 410, true, 128, 546)} stroke="#e0e0e0" />
        <path d={lines(128, 546, 2.15, 408, false, 154, 840)} stroke="#e0e0e0" />
        <path d={lines(154, 840, 21.5, 409.7, true, 128, 546)} stroke="#5a5a5a" />
        <path d={lines(128, 546, 21.5, 407.9, false, 154, 840)} stroke="#5a5a5a" />
      </g>
      <path d="M410 128V408" stroke="#338a33" strokeWidth="1.700" />
      <path d="M410 408H840" stroke="#8c4247" strokeWidth="1.700" />
      <g stroke="#000" strokeWidth=".9">
        <path d="M345.500 145.500V236M300.500 190.500H391" />
        <path d="M526.500 169V214M481.500 214.500H522M531 214.500H572" />
        <path d="M306.500 255V300M302.500 277.500H310.500" />
        <path d={w1.thin} /><path d={w2.thin} />
      </g>
      <circle cx={c1[0]} cy={c1[1]} r="45" stroke="#a82828" strokeWidth="1.100" />
      <g stroke="#8c1414" strokeWidth="1" shapeRendering="crispEdges">
        {[-9, -6, -3, 0, 3, 6, 9].map((v) => <path key={v} d={`M${409.5 + v} 397V417M401 ${407.5 + v}H419`} />)}
      </g>
      <g stroke="#000" strokeWidth="1.800">
        <circle cx="345.500" cy="190.500" r="45.200" />
        <path d="M522.600 259.500A45.200 45.200 0 1 1 530.400 259.500V214.500H522.600z" stroke="none" />
        <path d="M522.600 214.500V259.500A45.200 45.200 0 1 1 530.400 259.500V214.500z" />
        <rect x="302.700" y="255" width="7.600" height="45" />
        <path d={w1.bold} strokeLinejoin="round" /><path d={w2.bold} strokeLinejoin="round" />
      </g>
      <path d="M190.500 480V509.500H220" stroke="#555" />
      <AxisText x="192" y="480">y</AxisText><AxisText x="222" y="511">x</AxisText>
    </Drawing>
  );
};

const boldTicks = [182.9, 226.9, 249.9, 335.2, 359.7, 383.3, 403.1, 432.4, 482.1, 579.4, 677.2, 725.8, 755.1, 775, 799, 823.6, 843.5, 908.400, 931.4];
const thinTicks = [194.5, 257.700, 261.400, 270.300, 282.300, 304.300, 314.700, 341.400, 420.400, 447.600, 457.500, 667.800, 701.800, 711.200, 737.400, 750.400, 777.600, 817.400, 853.500, 875.400, 887.500, 896.300, 938.700];

const FrontView = () => (
  <Drawing width="799" height="474" viewBox="154 549 799 474" fill="none">
    <g shapeRendering="crispEdges">
      <path d={lines(154, 953, 10.73, 579, true, 549, 1023)} stroke="#e0e0e0" />
      <path d={lines(549, 1023, 10.73, 822, false, 154, 953)} stroke="#e0e0e0" />
      <path d={lines(154, 953, 107.25, 579, true, 549, 1023)} stroke="#5a5a5a" />
      <path d={lines(549, 1023, 107.25, 822, false, 154, 953)} stroke="#5a5a5a" />
    </g>
    <path d="M579 549V812" stroke="#338a33" strokeWidth="1.700" />
    <rect x="154" y="811" width="799" height="11" fill="#fff" />
    <rect x="354" y="811" width="450" height="11" fill="url(#bar)" />
    <path d={boldTicks.map((x) => `M${x} 811V822`).join("")} stroke="#000" strokeWidth="1.600" />
    <path d={thinTicks.map((x) => `M${x} 811V822`).join("")} stroke="#000" strokeWidth=".9" />
    <path d="M154 811.500H953M154 822.200H953" stroke="#000" strokeWidth="1.900" />
    <path d="M154 816.500H953" stroke="#000" strokeWidth="1" />
    <path d="M190.500 957V987.500H220" stroke="#555" />
    <AxisText x="192" y="958">z</AxisText><AxisText x="222" y="988">x</AxisText>
  </Drawing>
);

/* ---------- canvas objects ---------- */
const sliders = [
  { x: 1077, y: 312, w: 158, lw: 30, label: "Size", t0: 1117, t1: 1224, knob: 1129, value: "10.500", vx: 1134 },
  { x: 1072, y: 361, w: 171, lw: 50, label: "Extent R", t0: 1132, t1: 1233, diamond: 1182.5, value: "5", vx: 1169.5 },
  { x: 1077, y: 410, w: 171, lw: 50, label: "Extent P", t0: 1137, t1: 1238, diamond: 1207.5, value: "7", vx: 1195 },
  { x: 1042, y: 572, w: 161, lw: 40, label: "X Size", t0: 1092, t1: 1192, knob: 1127.5, value: "3.5", vx: 1133 },
  { x: 1043, y: 604, w: 160, lw: 39, label: "Y Size", t0: 1092, t1: 1192, knob: 1113, value: "21.000", vx: 1119 },
  { x: 1043, y: 705, w: 164, lw: 43, label: "Length", t0: 1096, t1: 1196, diamond: 1196.5, value: "1", vx: 1185 },
];

const Slider = ({ s }) => {
  const x0 = s.x + 1.5 + s.lw, w = s.w - s.lw - 3, step = (s.t1 - s.t0) / 10;
  let ticks = `M${s.t0} 10.500H${s.t1}`;
  for (let i = 0; i <= 10; i++) ticks += `M${s.t0 + i * step} ${i % 5 === 0 ? 4.500 : 6.500}V10.500`;
  const k = s.knob || s.diamond, tw = s.value.length * 6.2;
  return (
    <SliderBox $x={s.x} $y={s.y} $w={s.w}>
      <SliderName $w={s.lw}>{s.label}</SliderName>
      <svg width={w} height="18" viewBox={`${x0} 0 ${w} 18`} fill="none">
        <path d={ticks} stroke="#9a9a9a" strokeWidth=".8" />
        <rect x={s.vx} y="4" width={s.value.length > 1 ? tw - 4 : 5} height="8" fill="#dadada" />
        {s.knob ? <circle cx={k} cy="9.500" r="3" fill="#fff" stroke="#000" strokeWidth="2.100" /> : <path d={`M${k} 6L${k + 3} 9.500 ${k} 13 ${k - 3} 9.500z`} fill="#fff" stroke="#000" strokeWidth="1.400" />}
        <ValueText x={s.vx} y="13.500">{s.value}</ValueText>
      </svg>
    </SliderBox>
  );
};

const Node = ({ x, y, w, h, name, lw, rw, ins, outs, idle }) => (
  <NodeBox $x={x} $y={y} $w={w} $h={h} $idle={idle}>
    <Ports $w={lw}>{ins.map((t) => <Port key={t}>{t}</Port>)}</Ports>
    <Core><CoreText>{name}</CoreText></Core>
    <Ports $w={rw} $out>{outs.map((t) => <Port key={t} $out>{t}</Port>)}</Ports>
  </NodeBox>
);

const wires = [
  [1238, 322.6, 1292, 325.7], [1247, 371.4, 1292, 345.7], [1251, 420.5, 1292, 365.7],
  [1206, 582.5, 1290, 571.7], [1206, 614.6, 1290, 591.7], [1206, 614.6, 1292, 695.7], [1210, 715.6, 1292, 715.7],
];
const grips = [
  [1235.5, 322.6], [1243.5, 371.4], [1248, 420.5], [1203, 582.5], [1203, 614.6], [1207, 715.6],
  [1295.5, 305.7], [1295.5, 325.7], [1295.5, 345.7], [1295.5, 365.7], [1358, 315.7], [1358, 355.7],
  [1293.5, 551.7], [1293.5, 571.7], [1293.5, 591.7], [1293.5, 611.7], [1349, 561.7], [1349, 601.7],
  [1295.5, 675.7], [1295.5, 695.7], [1295.5, 715.7], [1351.5, 695.7],
  [1375.7, 360.500], [1536, 360.500], [1041.500, 531.500], [1201.500, 531.500],
  [1455.500, 596.500], [1615.500, 596.500], [1296.500, 786.500], [1456.700, 786.500],
];

const notes = [
  { x: 1375, y: 295, w: 161, h: 131, pt: 4, text: "Use the Radial Grid to form the\ncomplex shape.\n\nThe Size will change the size\nof the shape.\n\nExtent R will change the cell\ncount from the center.\n\nExtent P will change the number\nof sides that are being formed." },
  { x: 1041, y: 492, w: 161, h: 79, pt: 16, text: "The X Size is the width of your\ncardboard. Increase or decrease\nthe value to account for\nvariance in size." },
  { x: 1455, y: 519, w: 161, h: 156, pt: 5, text: "ASSEMBLE THE SHAPES\n\nSet the dimensions for all\noutputs, then bake the Radial\nGrid, Rectangle and Cylinder.\n\nUse the Rectangle to cut slots\nin the complex shape and the\ncylinder.\n\nThese slots will be where\ncardboard pieces connect to\neach other." },
  { x: 1296, y: 736, w: 161, h: 101, pt: 0, text: "I created a cylinder to make\nblank circle pieces to test fit\nand connect different complex\nshapes to each other.\n\nThe Length of 1 accounts for\nthe 1 mm height that I've set\nthe height of all of the 3d\nshapes in Rhino." },
];

const HopperCanvas = () => (
  <Canvas>
    <Sheet />
    <CanvasGrid />
    <Wires width="956" height="861" viewBox="954 165 956 861" fill="none">
      {wires.map(([x1, y1, x2, y2], i) => {
        const dx = Math.max((x2 - x1) / 2, Math.abs(y2 - y1) * 0.62);
        return <path key={i} d={`M${x1} ${y1}C${x1 + dx} ${y1} ${x2 - dx} ${y2} ${x2} ${y2}`} stroke="#5a5855" strokeWidth="3" />;
      })}
      {grips.map(([x, y]) => <circle key={`${x}-${y}`} cx={x} cy={y} r="3.700" fill="#fff" stroke="#000" strokeWidth="1.900" />)}
    </Wires>
    {notes.map((n) => <Note key={n.x} $x={n.x} $y={n.y} $w={n.w} $h={n.h} $pt={n.pt}>{n.text}</Note>)}
    {sliders.map((s) => <Slider key={s.label} s={s} />)}
    <Node x={1295} y={293} w={63} h={85} name="RadGrid" lw={18.5} rw={17.5} ins={["P", "S", "Er", "Ep"]} outs={["C", "P"]} />
    <Node x={1293} y={539} w={56} h={85} name="Rectangle" lw={13} rw={16} ins={["P", "X", "Y", "R"]} outs={["R", "L"]} idle />
    <Node x={1295} y={663} w={57} h={65} name="Cyl" lw={13} rw={17} ins={["B", "R", "L"]} outs={["C"]} />
    <TimeTag $x={1295} $y={378} $w={63} $hot>17ms</TimeTag>
    <TimeTag $x={1295} $y={728} $w={57}>5ms</TimeTag>
    <CornerHandle />
    <Compass width="56" height="50" viewBox="1854 970 56 50" fill="none">
      <path d="M1857 975L1865 977 1865 979 1863 983 1859 981z" fill="#000" />
      <path d="M1863 991C1864 985 1867 981 1872 979" stroke="#000" strokeWidth="4" />
      <circle cx="1882.300" cy="996.300" r="20" fill="#fff" stroke="#222" strokeWidth="1" />
      <circle cx="1882.300" cy="996.300" r="17.500" fill="url(#dial)" stroke="#555" strokeWidth="1" />
      <path d="M1866 985L1872 982 1871 988zM1890 983L1897 981 1896 986zM1868 1010L1873 1006 1874 1011zM1892 1005L1898 1005 1895 1011z" fill="#fff" />
    </Compass>
  </Canvas>
);

/* ---------- data ---------- */
const modes = [["Grid Snap", 82, 16, true], ["Ortho", 44, 16], ["Planar", 60, 10], ["SmartTrack", 90, 9], ["Gumball", 72, 16, true], ["History", 50, 0]];
const toolTabs = [["Standard", 64], ["CPlanes", 59], ["Set View", 63], ["Display", 56], ["Select", 51], ["Viewport Layout", 98], ["Visibility", 62], ["Transform", 68], ["Curve Tools", 76], ["Surface Tools", 85], ["Solid Tools", 72], ["SubD Tools", 74], ["Mesh Tools", 73], ["Render T", 58]];
const snaps = ["End", "Near", "Point", "Midpoint", "Center", "Intersection", "Perpendicular", "Tangent", "Quadrant", "Knot", "Vertex", "On curve", "On surface", "On polysurface", "On mesh", "Project", "SmartTrack"];
const menus = [["Params", 51], ["Maths", 43], ["Sets", 36], ["Vector", 45], ["Curve", 43], ["Surface", 52], ["Mesh", 41], ["Intersect", 57], ["Transform", 64], ["Display", 50], ["PanelingTools", 84], ["Kangaroo2", 70]];
const views = [["Perspective", 111], ["Top", 61], ["Front", 71], ["Right", 71], ["Layouts...", 96]];

export default function App() {
  return (
    <>
      <Global />
      <Desktop>
        <Rhino>
          <RhinoHead>
            <TitleRow>
              <Dot $c="#48414d" /><Dot $c="#48414d" /><Dot $c="#48414d" />
              <DocTitle>
                <svg width="11" height="14" viewBox="0 0 11 14"><path d="M0 0H7L11 4V14H0z" fill="#77727c" /><path d="M1 8L3 3 5 6 8 5 10 9 7 12 4 9z" fill="#26202b" /></svg>
                hex-sh
              </DocTitle>
            </TitleRow>
            <ModeRow>
              <SidebarGlyph />
              {modes.map(([t, w, g, on]) => <Mode key={t} $w={w} $gap={g} $on={on}>{t}</Mode>)}
            </ModeRow>
          </RhinoHead>
          <TabRow>
            {toolTabs.map(([t, w], i) => <ToolTab key={t} $w={w} $on={i === 0}>{t}</ToolTab>)}
          </TabRow>
          <MainIcons />
          <ViewBar>
            <ViewBlank />
            <ViewTabs>
              <LayoutIcon $r={16} viewBox="0 0 16 15" fill="none" stroke="#2f5fc8"><path d="M.5 .5H15.500V14.500H.5zM8 .5V14.500M.5 7.500H15.500" strokeDasharray="5 1" /></LayoutIcon>
              <LayoutIcon $r={13} viewBox="0 0 16 15" fill="none" stroke="#666"><path d="M.5 .5H15.500V14.500H.5z" strokeDasharray="12 1" /></LayoutIcon>
              {views.map(([t, w], i) => (
                <React.Fragment key={t}><ViewSep /><ViewTab $w={w} $on={i === 1}>{t}</ViewTab></React.Fragment>
              ))}
            </ViewTabs>
          </ViewBar>
          <RhinoBody>
            <Side>
              <CommandBox>Command</CommandBox>
              <PaletteArea>
                <PaletteIcons />
                <Track><Thumb /></Track>
              </PaletteArea>
              <Snaps>
                <RadioRow><Radio $on />Persistent</RadioRow>
                <RadioRow><Radio />One shot</RadioRow>
                {snaps.map((t, i) => {
                  const off = t.startsWith("On ");
                  return <CheckRow key={t} $off={off} $mt={i === 0 ? 3 : 0}><Check $off={off} />{t}</CheckRow>;
                })}
                <CheckRow $mt={18}><Check />Disable all</CheckRow>
              </Snaps>
              <SideFoot><FootThumb /></SideFoot>
            </Side>
            <Views>
              <Viewport $h={418}><TopView /><ViewLabel $w={31}>Top</ViewLabel></Viewport>
              <Viewport $h={475}><FrontView /><ViewLabel $w={41}>Front</ViewLabel></Viewport>
            </Views>
          </RhinoBody>
          <RhinoStatus>
            <svg width="9" height="9" viewBox="0 0 9 9"><path d="M0 1.500H9M0 4.500H9M0 7.500H9" stroke="#aaa" /></svg>
            Command: Grasshopper
          </RhinoStatus>
        </Rhino>
        <HopperShadow>
          <Hopper>
            <HopperTitle>
              <Dot $c="#fe5850" /><Dot $c="#fdb427" /><Dot $c="#2ac43a" />
              <HopperName>Grasshopper - hex-shapes</HopperName>
            </HopperTitle>
            <MenuRow>
              {menus.map(([t, w], i) => <MenuItem key={t} $w={w} $on={i === 0}>{t}</MenuItem>)}
            </MenuRow>
            <RibbonGroups />
            <CanvasTools />
            <HopperCanvas />
            <HopperStatus><span>...</span><span>1.0.0007</span></HopperStatus>
          </Hopper>
        </HopperShadow>
      </Desktop>
      <SharedDefs />
    </>
  );
}
